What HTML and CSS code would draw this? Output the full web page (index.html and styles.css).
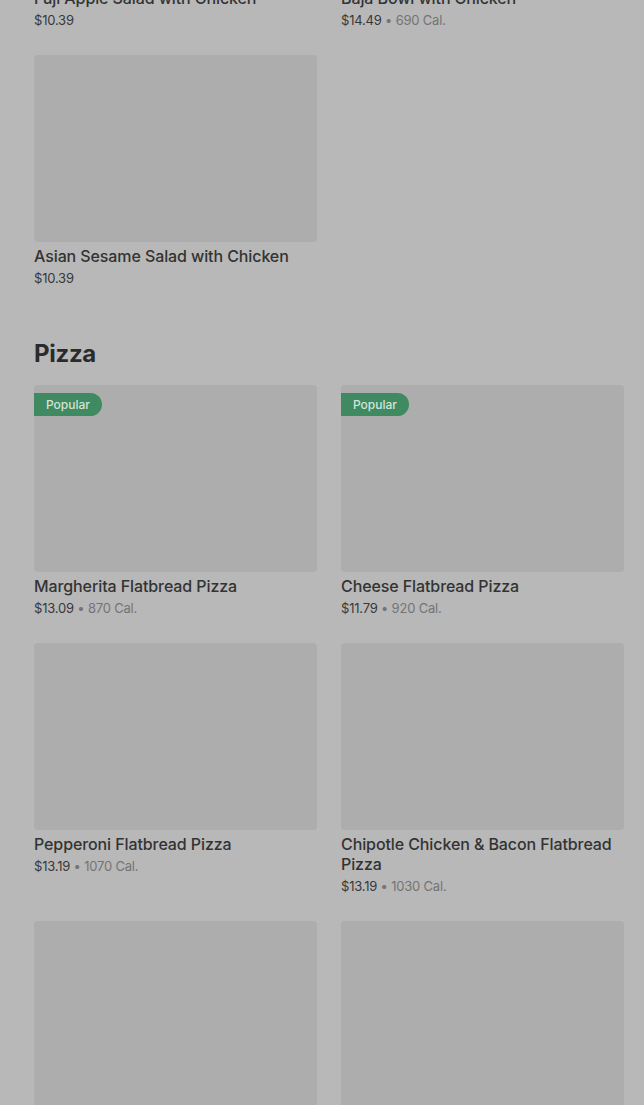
FILE: index.html
```html
<!DOCTYPE html>
<html lang="en">
<head>
  <meta charset="UTF-8">
  <meta name="viewport" content="width=device-width, initial-scale=1.0">
  <title>Menu</title>
  <link rel="stylesheet" href="styles.css">
</head>
<body>
  <div class="menu">
    <section class="category first">
      <div class="items">
        <div class="item">
          <div class="photo"></div>
          <div class="name">Fuji Apple Salad with Chicken</div>
          <div class="meta">$10.39</div>
        </div>
        <div class="item">
          <div class="photo"></div>
          <div class="name">Baja Bowl with Chicken</div>
          <div class="meta">$14.49 <span class="cal">• 690 Cal.</span></div>
        </div>
        <div class="item">
          <div class="photo"></div>
          <div class="name">Asian Sesame Salad with Chicken</div>
          <div class="meta">$10.39</div>
        </div>
      </div>
    </section>

    <section class="category">
      <h2>Pizza</h2>
      <div class="items">
        <div class="item">
          <div class="photo"><span class="badge">Popular</span></div>
          <div class="name">Margherita Flatbread Pizza</div>
          <div class="meta">$13.09 <span class="cal">• 870 Cal.</span></div>
        </div>
        <div class="item">
          <div class="photo"><span class="badge">Popular</span></div>
          <div class="name">Cheese Flatbread Pizza</div>
          <div class="meta">$11.79 <span class="cal">• 920 Cal.</span></div>
        </div>
        <div class="item">
          <div class="photo"></div>
          <div class="name">Pepperoni Flatbread Pizza</div>
          <div class="meta">$13.19 <span class="cal">• 1070 Cal.</span></div>
        </div>
        <div class="item">
          <div class="photo"></div>
          <div class="name">Chipotle Chicken &amp; Bacon Flatbread Pizza</div>
          <div class="meta">$13.19 <span class="cal">• 1030 Cal.</span></div>
        </div>
        <div class="item">
          <div class="photo"></div>
          <div class="name">&nbsp;</div>
          <div class="meta">&nbsp;</div>
        </div>
        <div class="item">
          <div class="photo"></div>
          <div class="name">&nbsp;</div>
          <div class="meta">&nbsp;</div>
        </div>
      </div>
    </section>
  </div>
</body>
</html>
```

FILE: styles.css
```css
html, body {
  margin: 0;
  background-color: #b8b8b8;
}

body {
  font-family: Inter, "Noto Sans", Arial, sans-serif;
  color: #2e2e2e;
  overflow: hidden;
  height: 1105px;
}

.menu {
  padding: 0 20px 0 34px;
  margin-top: -203px;
}

.category h2 {
  margin: 48px 0 16px;
  padding-top: 1px;
  font-size: 24px;
  line-height: 31px;
  font-weight: 700;
  letter-spacing: -0.3px;
  color: #2b2b2b;
}

.items {
  display: grid;
  grid-template-columns: 283px 283px;
  column-gap: 24px;
  row-gap: 24px;
  align-items: start;
}

.photo {
  position: relative;
  height: 187px;
  background-color: #adadad;
  border-radius: 4px;
}

.badge {
  position: absolute;
  top: 8px;
  left: 0;
  height: 23px;
  line-height: 23px;
  padding: 0 12px;
  font-size: 12px;
  font-weight: 500;
  color: #d4e4d9;
  background-color: #3f8a61;
  border-radius: 0 12px 12px 0;
}

.name {
  margin-top: 4px;
  font-size: 16px;
  line-height: 20px;
  font-weight: 500;
  letter-spacing: -0.1px;
  color: #333;
}

.meta {
  padding-top: 1px;
  font-size: 13px;
  line-height: 22px;
  color: #383838;
  letter-spacing: -0.2px;
}

.cal {
  color: #747474;
}
```
